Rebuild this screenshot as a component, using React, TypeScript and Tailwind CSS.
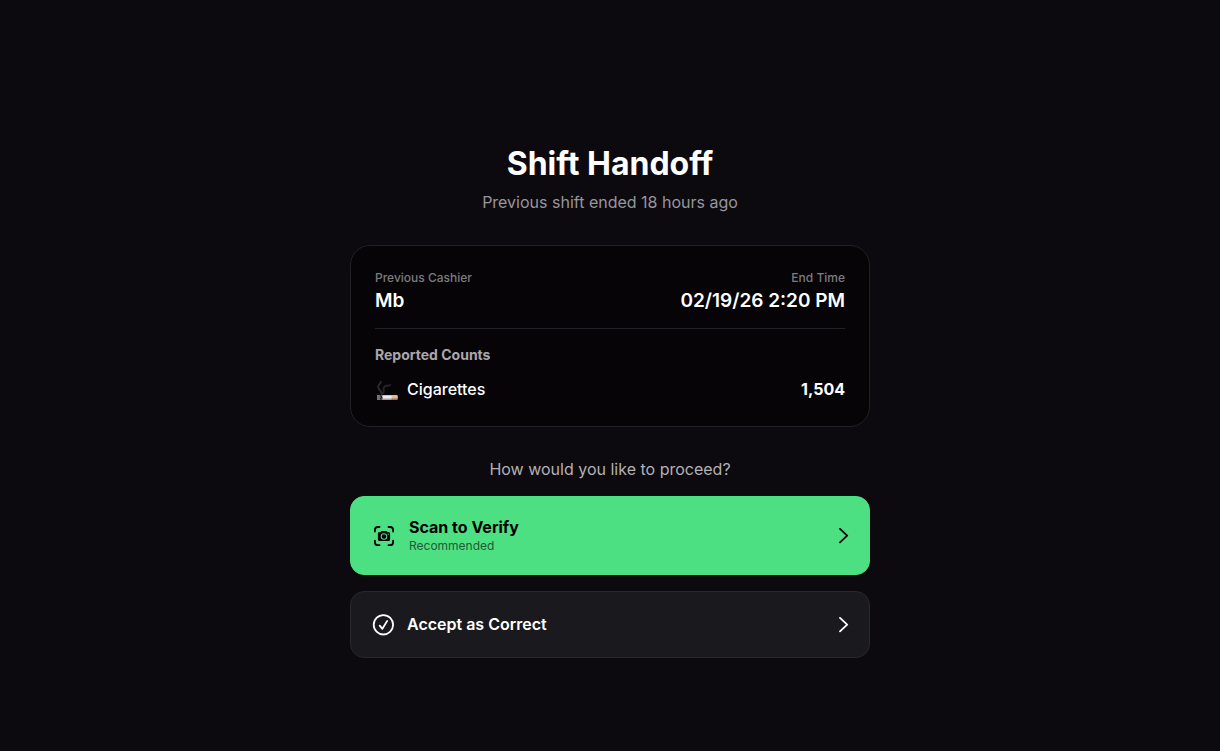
import React from 'react';

interface ReportedCount {
  id: string;
  label: string;
  quantity: number;
}

const shift = {
  cashier: 'Mb',
  endTime: '02/19/26 2:20 PM',
  endedAgo: '18 hours ago',
};

const reportedCounts: ReportedCount[] = [
  { id: 'cigarettes', label: 'Cigarettes', quantity: 1504 },
];

function CigaretteIcon() {
  return (
    <svg className="w-6 h-6 shrink-0" viewBox="0 0 24 24" fill="none" aria-hidden="true">
      <defs>
        <linearGradient id="paper" x1="0" y1="0" x2="0" y2="1">
          <stop offset="0" stopColor="#b9b5ba" />
          <stop offset="0.4" stopColor="#ffffff" />
          <stop offset="1" stopColor="#8d898d" />
        </linearGradient>
        <linearGradient id="filter" x1="0" y1="0" x2="0" y2="1">
          <stop offset="0" stopColor="#d9ae80" />
          <stop offset="0.4" stopColor="#f0c8a0" />
          <stop offset="1" stopColor="#8a6240" />
        </linearGradient>
      </defs>
      <path d="M6.500 16C8 13.500 2.500 12 3.200 8.500C3.600 6.500 5.600 5.800 5.800 4" stroke="#2c2a2e" strokeWidth="2" strokeLinecap="round" />
      <path d="M7.500 15.500C10.500 13.500 7.500 11.500 9 9.200C10.400 7.200 13 8.400 15 7" stroke="#262428" strokeWidth="2" strokeLinecap="round" />
      <rect x="2" y="17" width="20.500" height="5" rx="1" fill="url(#paper)" />
      <path d="M16.500 17h5a1 1 0 0 1 1 1v3a1 1 0 0 1-1 1h-5z" fill="url(#filter)" />
      <path d="M3 17h5l-.8 1.600.9 1.400-1 2H3a1 1 0 0 1-1-1v-3a1 1 0 0 1 1-1z" fill="#77716f" />
      <path d="M5.400 17.400l1.200 1.600-1 1.400.8 1.200" stroke="#1f1c1c" strokeWidth="1.200" />
    </svg>
  );
}

function ScanIcon() {
  return (
    <svg className="w-6 h-6 shrink-0" viewBox="0 0 24 24" fill="none" aria-hidden="true">
      <g stroke="currentColor" strokeWidth="1.8" strokeLinecap="round">
        <path d="M3.900 7.600V6a3 3 0 0 1 3-3h1.600" />
        <path d="M17.500 3h1.600a3 3 0 0 1 3 3v1.600" />
        <path d="M22.100 16.600v1.600a3 3 0 0 1-3 3h-1.600" />
        <path d="M8.500 21.200H6.900a3 3 0 0 1-3-3v-1.600" />
      </g>
      <path
        fill="currentColor"
        fillRule="evenodd"
        d="M8.200 8.300h1.200l.7-.9c.2-.3.5-.4.9-.4h4c.4 0 .7.100.9.400l.7.900h1.200c.8 0 1.300.5 1.300 1.300v6c0 .8-.5 1.300-1.300 1.300H8.200c-.8 0-1.300-.5-1.300-1.300v-6c0-.8.5-1.300 1.300-1.300zM13 9.200a3.300 3.300 0 1 0 0 6.600 3.300 3.300 0 0 0 0-6.600zm0 1a2.300 2.300 0 1 1 0 4.600 2.300 2.300 0 0 1 0-4.600zm4.200-.8a.7.7 0 1 0 0 1.400.7.7 0 0 0 0-1.400z"
      />
    </svg>
  );
}

function CheckIcon() {
  return (
    <svg className="w-6 h-6 shrink-0" viewBox="0 0 24 24" fill="none" stroke="currentColor" aria-hidden="true">
      <circle cx="12.4" cy="11.8" r="9.7" strokeWidth="1.8" />
      <path strokeLinecap="round" strokeLinejoin="round" strokeWidth="1.8" d="M8.700 12.600l2.700 3.200L16.200 7.900" />
    </svg>
  );
}

function ChevronIcon() {
  return (
    <svg className="w-3 h-4 shrink-0" viewBox="0 0 12 16" fill="none" stroke="currentColor" aria-hidden="true">
      <path strokeLinecap="round" strokeLinejoin="round" strokeWidth="1.8" d="M3 0.900L10.200 7.600L3 14.300" />
    </svg>
  );
}

export default function App() {
  return (
    <main className="flex min-h-screen flex-col items-center justify-center bg-[#0c0a0f] px-4 pt-[51px] font-['Inter',sans-serif] text-white">
      <div className="w-full max-w-[520px]">
        <header className="text-center">
          <h1 className="text-[32px] leading-[39px] font-bold">Shift Handoff</h1>
          <p className="mt-2 text-base leading-[22px] text-[#98969b]">
            Previous shift ended {shift.endedAgo}
          </p>
        </header>

        {/* Previous shift summary */}
        <section className="mt-8 rounded-[20px] border border-[#222024] bg-[#060407] p-6">
          <dl className="flex justify-between border-b border-[#222024] pb-3">
            <div>
              <dt className="text-xs leading-4 font-medium text-[#7d7b7f]">Previous Cashier</dt>
              <dd className="text-[19px] leading-[30px] font-semibold">{shift.cashier}</dd>
            </div>
            <div className="text-right">
              <dt className="text-xs leading-4 font-medium text-[#7d7b7f]">End Time</dt>
              <dd className="text-[19px] leading-[30px] font-semibold">{shift.endTime}</dd>
            </div>
          </dl>

          <h2 className="mt-4 text-sm leading-5 font-bold text-[#a9a7ab]">Reported Counts</h2>
          <ul className="mt-3">
            {reportedCounts.map((item) => (
              <li key={item.id} className="flex items-center gap-2 text-base leading-[25px]">
                <CigaretteIcon />
                <span className="font-medium">{item.label}</span>
                <span className="ml-auto font-bold">{item.quantity.toLocaleString('en-US')}</span>
              </li>
            ))}
          </ul>
        </section>

        <p className="mt-8 text-center text-base leading-[21px] text-[#b3b1b5]">
          How would you like to proceed?
        </p>

        {/* Actions */}
        <div className="mt-4 flex flex-col gap-4">
          <button
            type="button"
            className="flex w-full items-center gap-[14px] rounded-[14px] border border-[#4de082] bg-[#4de082] p-5 text-left text-black"
          >
            <ScanIcon />
            <span className="flex-1">
              <span className="block text-base leading-5 font-bold">Scan to Verify</span>
              <span className="block text-xs leading-[17px] text-[#1f5a34]">Recommended</span>
            </span>
            <ChevronIcon />
          </button>
          <button
            type="button"
            className="flex w-full items-center gap-3 rounded-[14px] border border-[#28272b] bg-[#1a191e] p-5 text-left"
          >
            <CheckIcon />
            <span className="flex-1 text-base leading-[25px] font-semibold">Accept as Correct</span>
            <ChevronIcon />
          </button>
        </div>
      </div>
    </main>
  );
}
